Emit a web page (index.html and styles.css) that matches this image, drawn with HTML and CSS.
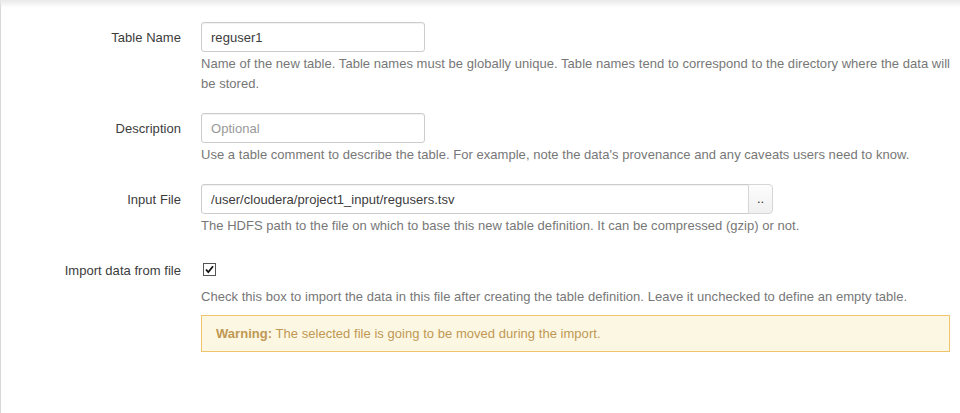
FILE: index.html
```html
<!DOCTYPE html>
<html>
<head>
<meta charset="utf-8">
<link rel="stylesheet" href="styles.css">
</head>
<body>
<div class="topshade"></div>
<div class="panel">
  <form class="form">
    <div class="group">
      <label class="label">Table Name</label>
      <div class="controls">
        <input class="input" type="text" value="reguser1">
        <p class="help">Name of the new table. Table names must be globally unique. Table names tend to correspond to the directory where the data will be stored.</p>
      </div>
    </div>
    <div class="group">
      <label class="label">Description</label>
      <div class="controls">
        <input class="input" type="text" placeholder="Optional">
        <p class="help">Use a table comment to describe the table. For example, note the data's provenance and any caveats users need to know.</p>
      </div>
    </div>
    <div class="group">
      <label class="label">Input File</label>
      <div class="controls">
        <div class="append">
          <input class="input input-path" type="text" value="/user/cloudera/project1_input/regusers.tsv">
          <button class="btn" type="button">..</button>
        </div>
        <p class="help">The HDFS path to the file on which to base this new table definition. It can be compressed (gzip) or not.</p>
      </div>
    </div>
    <div class="group">
      <label class="label">Import data from file</label>
      <div class="controls">
        <div class="checkrow">
          <svg class="check" width="13" height="13" viewBox="0 0 13 13">
            <rect x="0.5" y="0.5" width="12" height="12" fill="#fff" stroke="#555"/>
            <path d="M3 6.5 L5.3 9.2 L10 3.2" fill="none" stroke="#111" stroke-width="1.8"/>
          </svg>
        </div>
        <p class="help">Check this box to import the data in this file after creating the table definition. Leave it unchecked to define an empty table.</p>
        <div class="alert"><strong>Warning:</strong> The selected file is going to be moved during the import.</div>
      </div>
    </div>
  </form>
</div>
</body>
</html>
```
FILE: styles.css
```css
html, body {
  margin: 0;
  padding: 0;
  background: #fff;
}
body {
  font-family: "Liberation Sans", Arial, sans-serif;
  font-size: 13px;
  letter-spacing: 0.035px;
  color: #3c3c3c;
  height: 413px;
  overflow: hidden;
  position: relative;
}
.topshade {
  position: absolute;
  left: 0;
  top: 0;
  right: 0;
  height: 8px;
  background: linear-gradient(to bottom, #e9e9e9, rgba(255,255,255,0));
  z-index: 1;
}
.panel {
  border-left: 1px solid #d8d8d8;
  height: 413px;
  box-sizing: border-box;
  padding-top: 22px;
}
.form {
  margin: 0;
}
.group {
  display: flex;
  margin-bottom: 19px;
}
.label {
  width: 180px;
  flex: none;
  text-align: right;
  line-height: 30px;
  padding-top: 1px;
  box-sizing: border-box;
}
.controls {
  margin-left: 20px;
  width: 749px;
}
.input {
  display: block;
  box-sizing: border-box;
  width: 224px;
  height: 30px;
  margin: 0;
  padding: 4px 9px;
  font-family: inherit;
  font-size: 13px;
  letter-spacing: inherit;
  color: #3c3c3c;
  border: 1px solid #ccc;
  border-radius: 3px;
  outline: none;
  background: #fff;
  box-shadow: inset 0 1px 1px rgba(0,0,0,0.06);
}
.input::placeholder {
  color: #999;
}
.append {
  display: flex;
}
.input-path {
  width: 548px;
  border-radius: 3px 0 0 3px;
}
.btn {
  width: 25px;
  height: 30px;
  margin-left: -1px;
  padding: 0;
  font-family: inherit;
  font-size: 13px;
  font-weight: normal;
  color: #333;
  border: 1px solid #d6d6d6;
  border-radius: 0 4px 4px 0;
  background: linear-gradient(to bottom, #fdfdfd, #f0f0f0);
  line-height: 28px;
}
.help {
  margin: 2px 0 0;
  line-height: 20px;
  color: #777;
}
.checkrow {
  height: 30px;
  display: flex;
  align-items: center;
  padding-left: 2px;
}
.check {
  display: block;
  margin-top: -2px;
}
.alert {
  margin-top: 8px;
  box-sizing: border-box;
  height: 37px;
  padding: 0 14px;
  line-height: 35px;
  background: #fcf7e3;
  border: 1px solid #f0c36d;
  color: #c09853;
}
.alert strong {
  font-weight: bold;
}
```
